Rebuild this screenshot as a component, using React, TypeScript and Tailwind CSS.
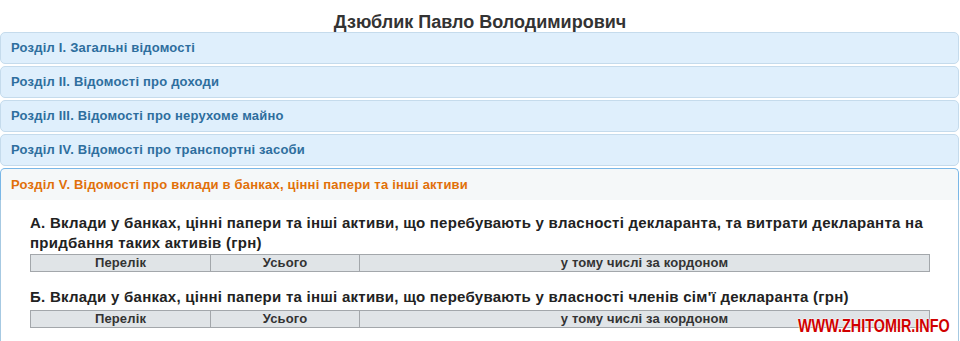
import React from "react";

const sections = [
  "Розділ І. Загальні відомості",
  "Розділ ІІ. Відомості про доходи",
  "Розділ ІІІ. Відомості про нерухоме майно",
  "Розділ IV. Відомості про транспортні засоби",
];

const AssetTable: React.FC = () => (
  <table className="w-[900px] border-collapse table-fixed text-[13px] leading-[16px] font-bold text-[#333] tracking-[0.15px]">
    <thead>
      <tr className="bg-[#e0e4e7]">
        <th className="w-[180px] border border-[#a3a7ab] font-bold">Перелік</th>
        <th className="w-[149px] border border-[#a3a7ab] font-bold">Усього</th>
        <th className="border border-[#a3a7ab] font-bold">у тому числі за кордоном</th>
      </tr>
    </thead>
  </table>
);

export default function App() {
  return (
    <div
      className="relative w-[960px] h-[341px] overflow-hidden bg-white"
      style={{ fontFamily: '"Liberation Sans", Arial, sans-serif' }}
    >
      <h1 className="pt-[12px] text-center text-[18px] leading-[20px] font-bold text-[#333]">
        Дзюблик Павло Володимирович
      </h1>
      <div className="w-[959px] flex flex-col gap-[2px]">
        {sections.map((s) => (
          <div
            key={s}
            className="h-[32px] flex items-center pl-[10px] bg-[#dfeffc] border border-[#c5dbec] rounded-[5px] text-[13px] font-bold text-[#2e6e9e] tracking-[0.2px]"
          >
            {s}
          </div>
        ))}
        <div>
          <div className="h-[32px] flex items-center pl-[10px] bg-[#f5f8f9] border border-[#79b7e7] border-b-0 rounded-t-[5px] text-[13px] font-bold text-[#e17009] tracking-[0.2px]">
            Розділ V. Відомості про вклади в банках, цінні папери та інші активи
          </div>
          <div className="h-[200px] border border-t-0 border-[#a6c9e2] bg-white pl-[29px] pt-[13px]">
            <h3 className="w-[900px] text-[15px] leading-[20px] font-bold text-[#222] tracking-[0.26px]">
              А. Вклади у банках, цінні папери та інші активи, що перебувають у власності декларанта, та витрати декларанта на придбання таких активів (грн)
            </h3>
            <div className="mt-[1px]">
              <AssetTable />
            </div>
            <h3 className="mt-[15px] w-[900px] text-[15px] leading-[20px] font-bold text-[#222] tracking-[0.26px]">
              Б. Вклади у банках, цінні папери та інші активи, що перебувають у власності членів сім'ї декларанта (грн)
            </h3>
            <div className="mt-[3px]">
              <AssetTable />
            </div>
          </div>
        </div>
      </div>
      <div
        className="absolute left-[798px] top-[314px] origin-left scale-x-[0.8] whitespace-nowrap text-[18px] leading-[24px] font-bold text-[#d00000]"
        style={{ textShadow: "0 0 2px #fff, 0 0 2px #fff" }}
      >
        WWW.ZHITOMIR.INFO
      </div>
    </div>
  );
}
